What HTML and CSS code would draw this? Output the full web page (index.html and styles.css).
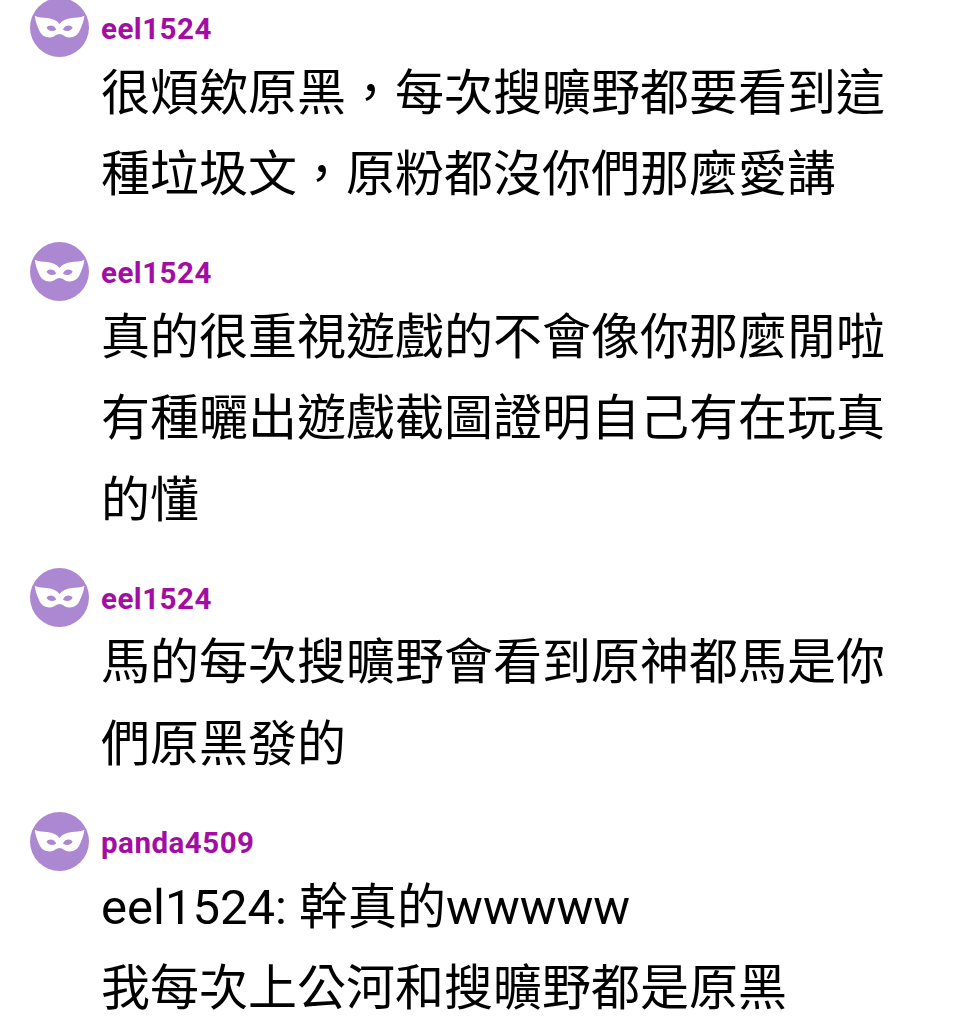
FILE: index.html
```html
<!DOCTYPE html>
<html lang="zh-TW">
<head>
    <meta charset="UTF-8">
    <title>留言</title>
    <link rel="stylesheet" href="styles.css">
</head>
<body>
    <svg class="sprite">
        <symbol id="mask" viewBox="0 0 59 59">
            <path fill-rule="evenodd" d="M4.8 17.8 C9 19.8 13 19.6 17 20 C23 20.6 27 22.5 29.6 26 C32 22.5 36 20.6 42 20 C46 19.6 50 19.8 54.4 17.8 C54 23 51.5 29 49.5 33 C47.5 37.5 43.5 39.6 39 39.4 C34 39.2 33 36 29.6 36 C26 36 25 39.2 20 39.4 C15.5 39.6 11.5 37.5 9.5 33 C7.5 29 5.2 23 4.8 17.8 Z M16.6 29.6 C18.6 26.2 25.2 27 26.2 31.8 C22.5 34 17.8 33.4 16.6 29.6 Z M42.6 29.6 C40.6 26.2 34 27 33 31.8 C36.7 34 41.4 33.4 42.6 29.6 Z"/>
        </symbol>
    </svg>
    <div class="comments">
        <div class="comment">
            <div class="avatar"><svg><use href="#mask"/></svg></div>
            <div class="content">
                <div class="name">eel1524</div>
                <p class="text">很煩欸原黑，每次搜曠野都要看到這<br>種垃圾文，原粉都沒你們那麼愛講</p>
            </div>
        </div>
        <div class="comment">
            <div class="avatar"><svg><use href="#mask"/></svg></div>
            <div class="content">
                <div class="name">eel1524</div>
                <p class="text">真的很重視遊戲的不會像你那麼閒啦<br>有種曬出遊戲截圖證明自己有在玩真<br>的懂</p>
            </div>
        </div>
        <div class="comment">
            <div class="avatar"><svg><use href="#mask"/></svg></div>
            <div class="content">
                <div class="name">eel1524</div>
                <p class="text">馬的每次搜曠野會看到原神都馬是你<br>們原黑發的</p>
            </div>
        </div>
        <div class="comment">
            <div class="avatar"><svg><use href="#mask"/></svg></div>
            <div class="content">
                <div class="name">panda4509</div>
                <p class="text">eel1524: 幹真的wwwww<br>我每次上公河和搜曠野都是原黑</p>
            </div>
        </div>
    </div>
</body>
</html>
```
FILE: styles.css
```css
* {
    margin: 0;
    padding: 0;
    box-sizing: border-box;
}

body {
    width: 960px;
    height: 1024px;
    overflow: hidden;
    background: #ffffff;
    color: #000000;
    font-family: Roboto, 'Noto Sans CJK TC', sans-serif;
}

.sprite {
    display: none;
}

.comments {
    margin-top: -2px;
    padding-left: 30px;
}

.comment {
    display: flex;
    gap: 12px;
    margin-bottom: 26.5px;
}

.avatar {
    flex: none;
    width: 59px;
    height: 59px;
    border-radius: 50%;
    background: #ad88d2;
}

.avatar svg {
    display: block;
    width: 59px;
    height: 59px;
    fill: #ffffff;
}

.name {
    height: 54.5px;
    color: #a30da3;
    font-size: 29.5px;
    font-weight: 700;
    line-height: 62px;
    letter-spacing: 0.5px;
}

.text {
    font-size: 49px;
    line-height: 81.6px;
    white-space: nowrap;
}
```
